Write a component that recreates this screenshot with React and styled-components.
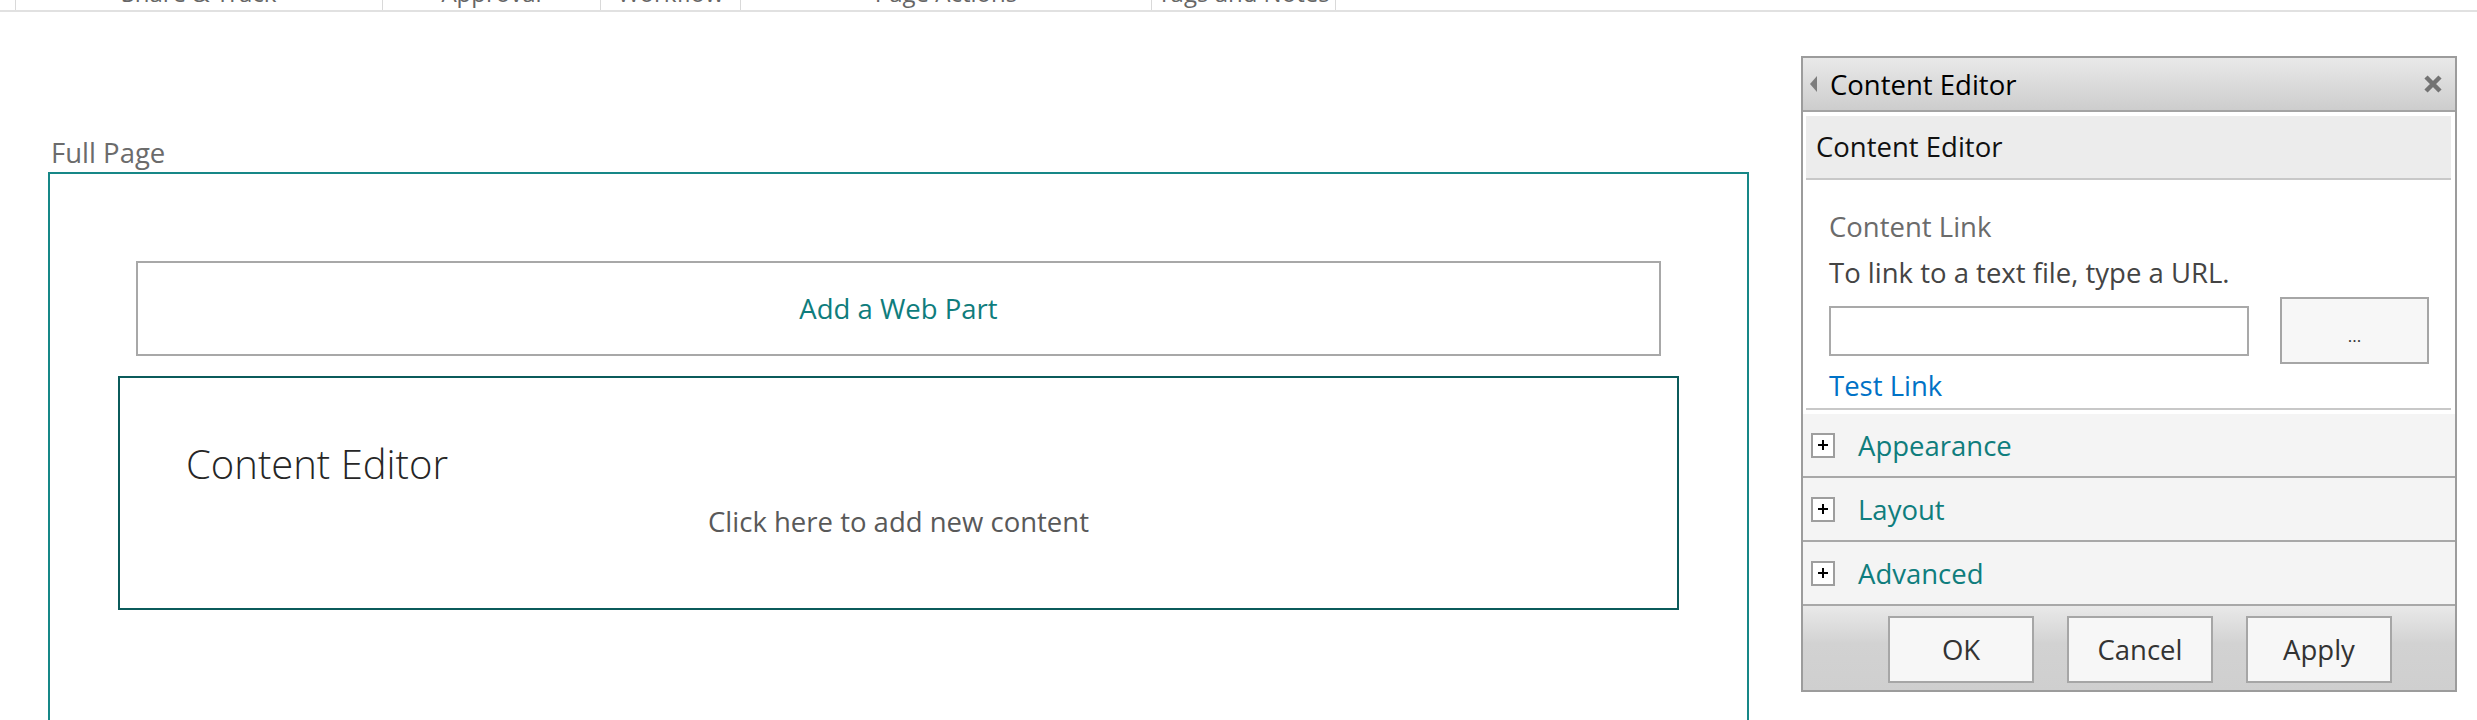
import React from 'react';
import styled, { createGlobalStyle } from 'styled-components';

const GlobalStyle = createGlobalStyle`
  html, body {
    margin: 0;
    padding: 0;
    overflow: hidden;
    background: #fff;
  }
  body {
    font-family: 'Open Sans', 'Noto Sans', sans-serif;
    font-size: 27.5px;
    color: #333;
  }
  * {
    box-sizing: border-box;
  }
`;

const ribbonTabs = [
  { label: 'Share & Track', width: 367 },
  { label: 'Approval', width: 218 },
  { label: 'Workflow', width: 140 },
  { label: 'Page Actions', width: 411 },
  { label: 'Tags and Notes', width: 185 },
];

const sections = ['Appearance', 'Layout', 'Advanced'];
const footerButtons = ['OK', 'Cancel', 'Apply'];

export default function App() {
  return (
    <>
      <GlobalStyle />
      <RibbonBar>
        {ribbonTabs.map((tab, index) => (
          <RibbonTab key={index} w={tab.width} last={index === ribbonTabs.length - 1}>
            <span>{tab.label}</span>
          </RibbonTab>
        ))}
      </RibbonBar>

      <Workspace>
        <PageColumn>
          <ZoneLabel>Full Page</ZoneLabel>
          <Zone>
            <AddWebPart>Add a Web Part</AddWebPart>
            <WebPart>
              <WebPartTitle>Content Editor</WebPartTitle>
              <WebPartHint>Click here to add new content</WebPartHint>
            </WebPart>
          </Zone>
        </PageColumn>

        <ToolPane>
          <PaneHeader>
            <svg width="7" height="16" viewBox="0 0 7 16">
              <polygon points="7,0 0,8 7,16" fill="#7d7d7d" />
            </svg>
            <PaneTitle>Content Editor</PaneTitle>
            <CloseButton>
              <svg width="20" height="20" viewBox="0 0 20 20">
                <path d="M3 3 L17 17 M17 3 L3 17" stroke="#737373" strokeWidth="4.5" />
              </svg>
            </CloseButton>
          </PaneHeader>

          <PartName>Content Editor</PartName>

          <LinkSection>
            <FieldLabel>Content Link</FieldLabel>
            <FieldHelp>To link to a text file, type a URL.</FieldHelp>
            <InputRow>
              <UrlInput />
              <BrowseButton>...</BrowseButton>
            </InputRow>
            <TestLink>Test Link</TestLink>
          </LinkSection>

          <Sections>
            {sections.map((name) => (
              <SectionRow key={name}>
                <PlusBox>
                  <svg width="12" height="12" viewBox="0 0 12 12">
                    <path d="M1 6 H11 M6 1 V11" stroke="#000" strokeWidth="2" />
                  </svg>
                </PlusBox>
                <SectionName>{name}</SectionName>
              </SectionRow>
            ))}
          </Sections>

          <PaneFooter>
            {footerButtons.map((label) => (
              <FooterButton key={label}>{label}</FooterButton>
            ))}
          </PaneFooter>
        </ToolPane>
      </Workspace>
    </>
  );
}

const RibbonBar = styled.div`
  display: flex;
  height: 12px;
  padding-left: 15px;
  border-bottom: 2px solid #e1e1e1;
  overflow: hidden;
`;

const RibbonTab = styled.div`
  width: ${(props) => props.w}px;
  height: 10px;
  border-left: 1px solid #d9d9d9;
  border-right: ${(props) => (props.last ? '1px solid #d9d9d9' : 'none')};
  display: flex;
  justify-content: center;
  overflow: hidden;

  span {
    display: block;
    margin-top: -24px;
    font-size: 24px;
    line-height: 34px;
    color: #666;
    white-space: nowrap;
  }
`;

const Workspace = styled.div`
  display: flex;
  align-items: flex-start;
`;

const PageColumn = styled.div`
  margin-left: 48px;
  padding-top: 122px;
  width: 1701px;
  flex: 0 0 auto;
`;

const ZoneLabel = styled.div`
  padding-left: 3px;
  line-height: 38px;
  color: #6b6b6b;
`;

const Zone = styled.div`
  border: 2px solid #178787;
  border-bottom: none;
  padding: 87px 68px 0;
  height: 600px;
`;

const AddWebPart = styled.div`
  margin: 0 18px;
  height: 95px;
  border: 2px solid #a8a8a8;
  display: flex;
  align-items: center;
  justify-content: center;
  color: #0f7d7d;
`;

const WebPart = styled.div`
  margin-top: 20px;
  height: 234px;
  border: 2px solid #0b5b5b;
  padding: 59px 0 0 66px;
`;

const WebPartTitle = styled.div`
  font-size: 40px;
  font-weight: 300;
  line-height: 54px;
  color: #262626;
`;

const WebPartHint = styled.div`
  margin: 12px 0 0 -66px;
  line-height: 38px;
  text-align: center;
  color: #595959;
`;

const ToolPane = styled.div`
  margin: 44px 0 0 52px;
  width: 656px;
  flex: 0 0 auto;
  border: 2px solid #9c9c9c;
  background: #fff;
`;

const PaneHeader = styled.div`
  height: 54px;
  display: flex;
  align-items: center;
  padding: 0 12px 0 7px;
  background: linear-gradient(#e9e9e9, #cdcdcd);
  border-bottom: 2px solid #a3a3a3;
`;

const PaneTitle = styled.div`
  margin-left: 13px;
  color: #000;
`;

const CloseButton = styled.div`
  margin-left: auto;
  display: flex;
`;

const PartName = styled.div`
  margin: 4px 4px 0 3px;
  height: 64px;
  padding: 12px 0 0 10px;
  line-height: 38px;
  background: #ececec;
  border-bottom: 2px solid #c8c8c8;
  color: #111;
`;

const LinkSection = styled.div`
  margin: 0 4px 0 3px;
  padding: 24px 22px 3px 23px;
  border-bottom: 2px solid #c8c8c8;
`;

const FieldLabel = styled.div`
  line-height: 46px;
  color: #6b6b6b;
`;

const FieldHelp = styled.div`
  line-height: 46px;
  color: #444;
`;

const InputRow = styled.div`
  margin-top: 1px;
  display: flex;
  align-items: center;
  justify-content: space-between;
`;

const UrlInput = styled.input`
  width: 420px;
  height: 50px;
  border: 2px solid #a9a9a9;
  outline: none;
  background: #fff;
`;

const BrowseButton = styled.div`
  width: 149px;
  height: 67px;
  border: 2px solid #a6a6a6;
  background: #f7f7f7;
  display: flex;
  align-items: center;
  justify-content: center;
  font-size: 17px;
  padding-top: 10px;
  color: #333;
`;

const TestLink = styled.div`
  margin-top: 3px;
  line-height: 38px;
  color: #0072c6;
`;

const Sections = styled.div`
  margin-top: 4px;
`;

const SectionRow = styled.div`
  height: 64px;
  display: flex;
  align-items: center;
  padding-left: 8px;
  background: #f4f4f4;
  border-bottom: 2px solid #a8a8a8;
`;

const PlusBox = styled.div`
  width: 24px;
  height: 25px;
  border: 2px solid #9e9e9e;
  background: #fff;
  display: flex;
  align-items: center;
  justify-content: center;
`;

const SectionName = styled.div`
  margin-left: 23px;
  color: #0f7d7d;
`;

const PaneFooter = styled.div`
  height: 84px;
  display: flex;
  justify-content: flex-end;
  gap: 33px;
  padding: 10px 63px 0 0;
  background: linear-gradient(#e9e9e9, #d2d2d2 45%, #cfcfcf);
`;

const FooterButton = styled.div`
  width: 146px;
  height: 67px;
  border: 2px solid #a6a6a6;
  background: #f7f7f7;
  display: flex;
  align-items: center;
  justify-content: center;
  color: #333;
`;
